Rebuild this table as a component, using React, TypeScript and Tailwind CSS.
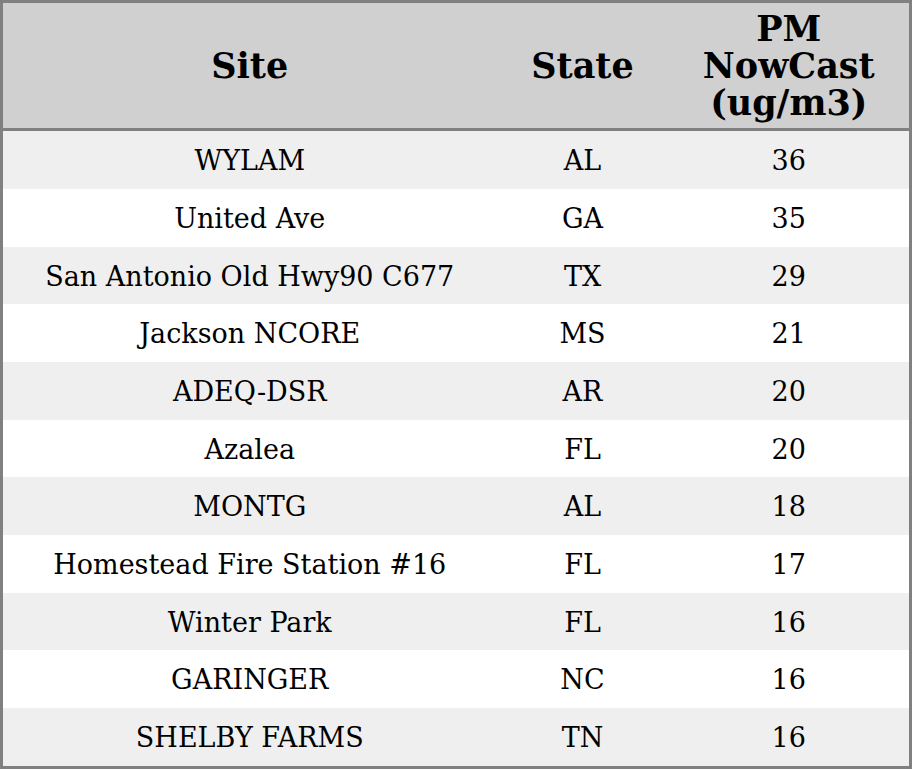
const rows: [string, string, number][] = [
    ["WYLAM", "AL", 36],
    ["United Ave", "GA", 35],
    ["San Antonio Old Hwy90 C677", "TX", 29],
    ["Jackson NCORE", "MS", 21],
    ["ADEQ-DSR", "AR", 20],
    ["Azalea", "FL", 20],
    ["MONTG", "AL", 18],
    ["Homestead Fire Station #16", "FL", 17],
    ["Winter Park", "FL", 16],
    ["GARINGER", "NC", 16],
    ["SHELBY FARMS", "TN", 16],
]

export default function App() {
    return (
        <div className="w-[912px] h-[769px] bg-white font-['DejaVu_Serif',serif] text-black">
            <table className="w-full h-[769px] border-collapse border-[3px] border-[#808080] text-center">
                <colgroup>
                    <col className="w-[495px]" />
                    <col className="w-[172px]" />
                    <col />
                </colgroup>
                <thead>
                    <tr className="bg-[#d0d0d0] h-[128px] border-b-[3px] border-[#808080]">
                        <th className="text-[35px] font-bold leading-[37px]">Site</th>
                        <th className="text-[35px] font-bold leading-[37px]">State</th>
                        <th className="text-[35px] font-bold leading-[37px]">PM<br />NowCast<br />(ug/m3)</th>
                    </tr>
                </thead>
                <tbody>
                    {rows.map(([site, state, pm], i) => (
                        <tr key={i} className={i % 2 === 0 ? "bg-[#efefef]" : "bg-white"}>
                            <td className="text-[27px] pt-[3px]">{site}</td>
                            <td className="text-[27px] pt-[3px]">{state}</td>
                            <td className="text-[27px] pt-[3px]">{pm}</td>
                        </tr>
                    ))}
                </tbody>
            </table>
        </div>
    )
}
